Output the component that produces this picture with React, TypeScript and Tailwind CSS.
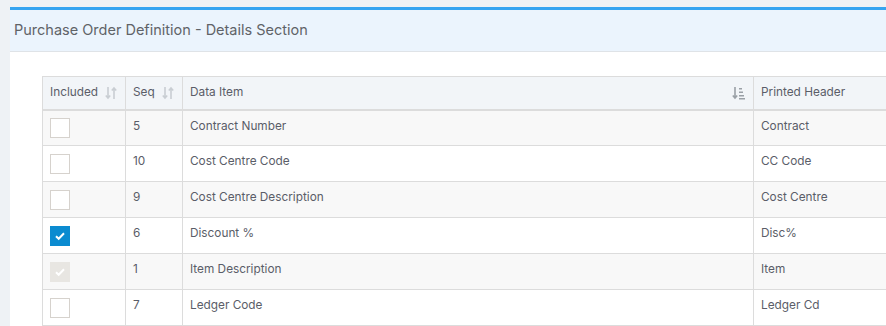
import React from "react";

const rows = [
  { seq: "5", item: "Contract Number", hdr: "Contract", state: "off" },
  { seq: "10", item: "Cost Centre Code", hdr: "CC Code", state: "off" },
  { seq: "9", item: "Cost Centre Description", hdr: "Cost Centre", state: "off" },
  { seq: "6", item: "Discount %", hdr: "Disc%", state: "on" },
  { seq: "1", item: "Item Description", hdr: "Item", state: "disabled" },
  { seq: "7", item: "Ledger Code", hdr: "Ledger Cd", state: "off" },
];

function SortBoth() {
  return (
    <svg width="12" height="14" viewBox="0 0 12 14" className="shrink-0">
      <g stroke="#c9ced3" strokeWidth="1.6" fill="none">
        <path d="M3 1v11M0.8 9.5L3 12l2.2-2.5" />
        <path d="M9 13V2M6.8 4.5L9 2l2.2 2.5" />
      </g>
    </svg>
  );
}

function SortDown() {
  return (
    <svg width="13" height="14" viewBox="0 0 13 14" className="shrink-0">
      <g stroke="#9aa0a6" strokeWidth="1.6" fill="none">
        <path d="M3 1v11M0.8 9.5L3 12l2.2-2.5" />
      </g>
      <g fill="#9aa0a6">
        <rect x="7" y="2" width="3" height="1.5" />
        <rect x="7" y="5.5" width="4" height="1.5" />
        <rect x="7" y="9" width="5" height="1.5" />
        <rect x="7" y="12" width="6" height="1.5" />
      </g>
    </svg>
  );
}

function Check({ state }: { state: string }) {
  if (state === "on") {
    return (
      <div className="w-[20px] h-[20px] bg-[#0b8bd0] flex items-center justify-center">
        <svg width="12" height="10" viewBox="0 0 12 10">
          <path d="M2 5.2l2.7 2.6L10 2.3" stroke="white" strokeWidth="2" fill="none" />
        </svg>
      </div>
    );
  }
  if (state === "disabled") {
    return (
      <div className="w-[20px] h-[20px] bg-[#e8e6e2] flex items-center justify-center">
        <svg width="12" height="10" viewBox="0 0 12 10">
          <path d="M2 5.2l2.7 2.6L10 2.3" stroke="white" strokeWidth="2" fill="none" />
        </svg>
      </div>
    );
  }
  return <div className="w-[20px] h-[20px] border border-[#d6d2cd] bg-white" />;
}

export default function App() {
  return (
    <div
      className="w-[886px] h-[326px] overflow-hidden bg-[#eef2f5] pt-[7px] pl-[10px]"
      style={{ fontFamily: "Inter, 'Noto Sans', sans-serif" }}
    >
      <div className="w-[900px] h-[330px] bg-white border-t-[3px] border-[#35a4f0]">
        <div className="h-[42px] bg-[#ebf4fd] border-b border-[#dfe3e7] flex items-center pl-[4px]">
          <span className="text-[14.5px] text-[#5f6368] -mt-[1px]">
            Purchase Order Definition - Details Section
          </span>
        </div>
        <div className="pt-[24px] pl-[32px]">
          <table className="border-collapse text-[11.8px] text-[#5a5d68] table-fixed" style={{ width: 900 }}>
            <colgroup>
              <col style={{ width: 83 }} />
              <col style={{ width: 57 }} />
              <col style={{ width: 571 }} />
              <col style={{ width: 189 }} />
            </colgroup>
            <thead>
              <tr className="h-[33px] bg-[#f2f5f8]">
                <th className="border border-[#dcdcdc] border-b-2 pl-[7px] pr-[8px] text-left font-normal">
                  <div className="flex items-center justify-between">
                    <span>Included</span>
                    <SortBoth />
                  </div>
                </th>
                <th className="border border-[#dcdcdc] border-b-2 pl-[7px] pr-[8px] text-left font-normal">
                  <div className="flex items-center justify-between">
                    <span>Seq</span>
                    <SortBoth />
                  </div>
                </th>
                <th className="border border-[#dcdcdc] border-b-2 pl-[7px] pr-[8px] text-left font-normal">
                  <div className="flex items-center justify-between">
                    <span>Data Item</span>
                    <SortDown />
                  </div>
                </th>
                <th className="border border-[#dcdcdc] border-b-2 pl-[7px] pr-[8px] text-left font-normal">
                  Printed Header
                </th>
              </tr>
            </thead>
            <tbody>
              {rows.map((r, i) => (
                <tr key={i} className={i % 2 === 0 ? "h-[36px] bg-[#f8f8f8]" : "h-[36px] bg-white"}>
                  <td className="border border-[#dcdcdc] pl-[7px] pr-[8px] align-middle">
                    <Check state={r.state} />
                  </td>
                  <td className="border border-[#dcdcdc] pl-[7px] pr-[8px] align-top pt-[7px]">{r.seq}</td>
                  <td className="border border-[#dcdcdc] pl-[7px] pr-[8px] align-top pt-[7px]">{r.item}</td>
                  <td className="border border-[#dcdcdc] pl-[7px] pr-[8px] align-top pt-[7px]">{r.hdr}</td>
                </tr>
              ))}
            </tbody>
          </table>
        </div>
      </div>
    </div>
  );
}
